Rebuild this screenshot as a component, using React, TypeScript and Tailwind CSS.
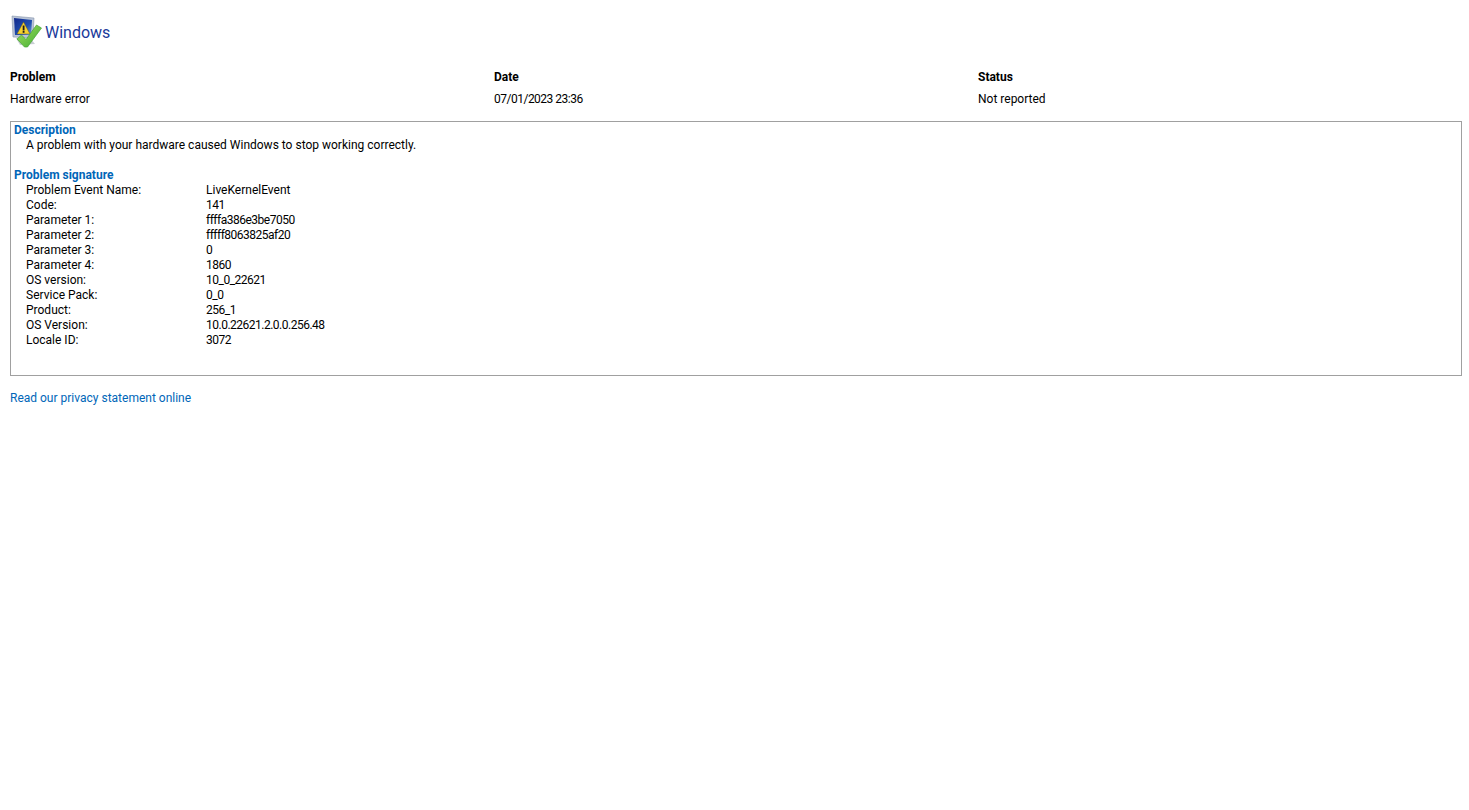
const rows = [
  ["Problem Event Name:", "LiveKernelEvent"],
  ["Code:", "141"],
  ["Parameter 1:", "ffffa386e3be7050"],
  ["Parameter 2:", "fffff8063825af20"],
  ["Parameter 3:", "0"],
  ["Parameter 4:", "1860"],
  ["OS version:", "10_0_22621"],
  ["Service Pack:", "0_0"],
  ["Product:", "256_1"],
  ["OS Version:", "10.0.22621.2.0.0.256.48"],
  ["Locale ID:", "3072"],
];

const ReportIcon = () => (
  <svg width="32" height="34" viewBox="0 0 32 34" className="shrink-0 -mt-0.5">
    <defs>
      <linearGradient id="screen" x1="0" y1="0" x2="1" y2="1">
        <stop offset="0" stopColor="#12288a" />
        <stop offset="0.6" stopColor="#1f4fb0" />
        <stop offset="1" stopColor="#6f9cd8" />
      </linearGradient>
      <linearGradient id="check" x1="0" y1="0" x2="1" y2="1">
        <stop offset="0" stopColor="#a4dd5c" />
        <stop offset="1" stopColor="#3fae35" />
      </linearGradient>
    </defs>
    <path d="M2 1 L24 3 L23 23 L3 22 Z" fill="#b9c4d6" stroke="#8794ab" strokeWidth="0.6" />
    <path d="M4 3 L22 5 L21 20 L5 20 Z" fill="url(#screen)" />
    <path d="M6 23 L21 24 L25 29 L10 30 Z" fill="#c9ced4" />
    <path d="M13.5 7 L20 19 L7 19 Z" fill="#f6d22f" stroke="#6b5a1c" strokeWidth="0.5" />
    <rect x="12.7" y="10.5" width="1.8" height="5" fill="#1c1c1c" />
    <rect x="12.7" y="16" width="1.8" height="1.8" fill="#1c1c1c" />
    <path d="M7 24 L11.5 20 L16 24.5 L26.5 10 L31.5 13 L17.5 32 L14.5 32 Z" fill="url(#check)" stroke="#46a335" strokeWidth="0.7" />
  </svg>
);

export default function App() {
  return (
    <div className="min-h-[810px] bg-white pl-2.5 pr-[7px] pt-[17px] text-xs leading-[15px] text-black font-['Roboto','Noto_Sans',sans-serif]">
      <div className="flex h-8 items-center gap-[3px]">
        <ReportIcon />
        <span className="text-base text-[#1a3a9a]">Windows</span>
      </div>

      <div className="mt-[21px] grid grid-cols-[484px_484px_1fr]">
        <span className="font-bold">Problem</span>
        <span className="font-bold">Date</span>
        <span className="font-bold">Status</span>
        <span className="mt-[7px]">Hardware error</span>
        <span className="mt-[7px] tracking-[-0.5px]">07/01/2023 23:36</span>
        <span className="mt-[7px]">Not reported</span>
      </div>

      <div className="mt-[14px] h-[255px] border border-[#a0a0a0] pl-[3px] pt-px">
        <h2 className="font-bold text-[#0066b8]">Description</h2>
        <p className="pl-3">A problem with your hardware caused Windows to stop working correctly.</p>
        <h2 className="mt-[15px] font-bold text-[#0066b8]">Problem signature</h2>
        <div className="grid grid-cols-[180px_1fr] pl-3">
          {rows.map(([label, value]) => (
            <div key={label} className="contents">
              <span>{label}</span>
              <span className={label === "Problem Event Name:" ? "" : "tracking-[-0.5px]"}>{value}</span>
            </div>
          ))}
        </div>
      </div>

      <a className="mt-[15px] block text-[#0066b8]">Read our privacy statement online</a>
    </div>
  );
}
